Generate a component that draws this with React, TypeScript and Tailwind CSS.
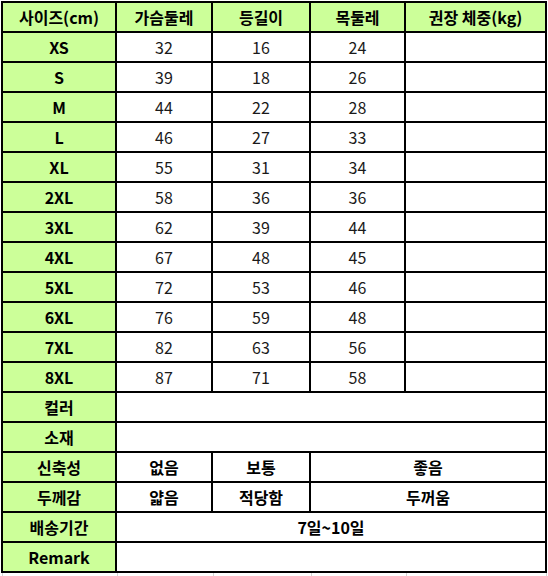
const sizes: [string, number, number, number][] = [
  ["XS", 32, 16, 24],
  ["S", 39, 18, 26],
  ["M", 44, 22, 28],
  ["L", 46, 27, 33],
  ["XL", 55, 31, 34],
  ["2XL", 58, 36, 36],
  ["3XL", 62, 39, 44],
  ["4XL", 67, 48, 45],
  ["5XL", 72, 53, 46],
  ["6XL", 76, 59, 48],
  ["7XL", 82, 63, 56],
  ["8XL", 87, 71, 58],
]

const label = "bg-[#ccff99] flex items-center justify-center font-bold text-[16px] text-black"
const cell = "bg-white flex items-center justify-center text-[16px] text-[#1a1a1a]"
const bold = "bg-white flex items-center justify-center font-bold text-[16px] text-black"

export default function App() {
  return (
    <div
      className="w-[548px] h-[576px] bg-white pl-[1px] pt-[1px] overflow-hidden"
      style={{ fontFamily: '"Noto Sans CJK KR", "Noto Sans", sans-serif' }}
    >
      <div className="grid grid-cols-[112px_94px_96px_93px_139px] auto-rows-[28px] gap-[2px] p-[2px] bg-black w-[546px] leading-none">
        {/* header */}
        <div className={label}>사이즈(cm)</div>
        <div className={label}>가슴둘레</div>
        <div className={label}>등길이</div>
        <div className={label}>목둘레</div>
        <div className={label}>권장 체중(kg)</div>

        {sizes.map(([s, a, b, c]) => (
          <div key={s} className="contents">
            <div className={label}>{s}</div>
            <div className={cell}>{a}</div>
            <div className={cell}>{b}</div>
            <div className={cell}>{c}</div>
            <div className={cell}></div>
          </div>
        ))}

        <div className={label}>컬러</div>
        <div className={`${cell} col-span-4`}></div>

        <div className={label}>소재</div>
        <div className={`${cell} col-span-4`}></div>

        <div className={label}>신축성</div>
        <div className={bold}>없음</div>
        <div className={bold}>보통</div>
        <div className={`${bold} col-span-2`}>좋음</div>

        <div className={label}>두께감</div>
        <div className={bold}>얇음</div>
        <div className={bold}>적당함</div>
        <div className={`${bold} col-span-2`}>두꺼움</div>

        <div className={label}>배송기간</div>
        <div className={`${bold} col-span-4`}>7일~10일</div>

        <div className={label}>Remark</div>
        <div className={`${cell} col-span-4`}></div>
      </div>

      {/* spreadsheet gridlines below the table */}
      <div className="flex h-[4px]">
        <div className="w-[115px] border-l border-[#d4d4d4] ml-[1px]" />
        <div className="w-[96px] border-l border-[#d4d4d4]" />
        <div className="w-[98px] border-l border-[#d4d4d4]" />
        <div className="w-[95px] border-l border-[#d4d4d4]" />
        <div className="w-[141px] border-l border-r border-[#d4d4d4]" />
      </div>
    </div>
  )
}
